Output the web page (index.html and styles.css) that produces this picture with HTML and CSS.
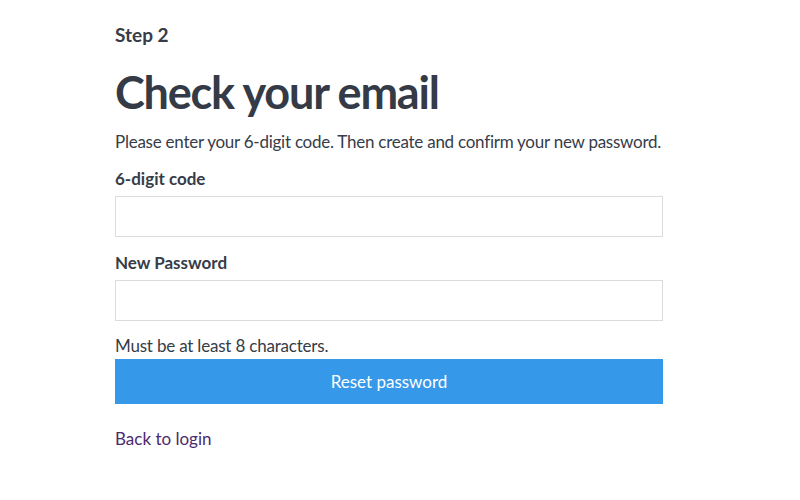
FILE: index.html
```html
<!DOCTYPE html>
<html lang="en">
<head>
<meta charset="utf-8">
<title>Check your email</title>
<link rel="stylesheet" href="styles.css">
</head>
<body>
<main class="page">
  <p class="step">Step 2</p>
  <h1 class="title">Check your email</h1>
  <p class="intro">Please enter your 6-digit code. Then create and confirm your new password.</p>
  <form class="form">
    <label class="label" for="code">6-digit code</label>
    <input class="input" id="code" type="text">
    <label class="label" for="pw">New Password</label>
    <input class="input" id="pw" type="password">
    <p class="hint">Must be at least 8 characters.</p>
    <button class="button" type="button">Reset password</button>
  </form>
  <a class="back" href="#">Back to login</a>
</main>
</body>
</html>
```
FILE: styles.css
```css
html, body {
  margin: 0;
  padding: 0;
  background: #ffffff;
}
body {
  font-family: "Lato", "Noto Sans", sans-serif;
  color: #363c48;
}
.page {
  width: 548px;
  padding: 24px 0 0 115px;
  display: flex;
  flex-direction: column;
}
.step {
  margin: 0;
  font-size: 19px;
  font-weight: 700;
  line-height: 22px;
}
.title {
  margin: 18px 0 0 0;
  font-size: 45px;
  font-weight: 700;
  line-height: 56px;
  letter-spacing: -1.2px;
  color: #343a46;
}
.intro {
  margin: 11px 0 0 0;
  font-size: 17px;
  line-height: 22px;
  letter-spacing: -0.25px;
  white-space: nowrap;
}
.form {
  display: flex;
  flex-direction: column;
}
.label {
  margin-top: 15px;
  font-size: 17px;
  font-weight: 700;
  line-height: 22px;
}
.input {
  margin: 6px 0 0 0;
  height: 41px;
  box-sizing: border-box;
  border: 1px solid #dcdcdc;
  background: #fff;
  font: inherit;
  padding: 0 10px;
}
.hint {
  margin: 14px 0 0 0;
  font-size: 17px;
  line-height: 22px;
  letter-spacing: -0.2px;
}
.button {
  margin-top: 2px;
  height: 45px;
  border: none;
  background: #3698e9;
  color: #ffffff;
  font-family: inherit;
  font-size: 17px;
  cursor: pointer;
}
.back {
  margin-top: 24px;
  align-self: flex-start;
  font-size: 17px;
  line-height: 22px;
  color: #4b2b6e;
  text-decoration: none;
}
```
